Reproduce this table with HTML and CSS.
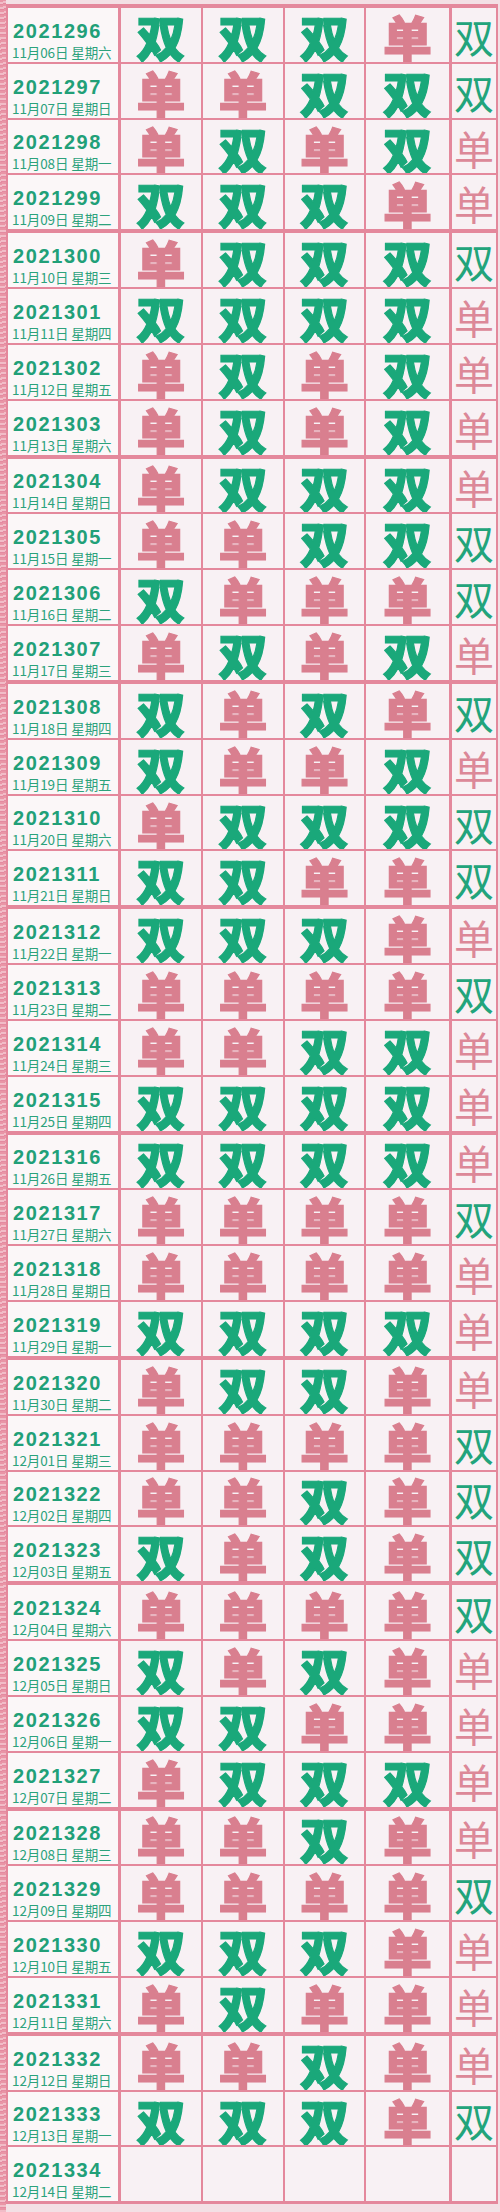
FILE: index.html
```html
<!DOCTYPE html>
<html lang="zh-CN">
<head>
<meta charset="utf-8">
<title>单双</title>
<link rel="stylesheet" href="styles.css">
</head>
<body>
<div class="page">
<div class="sheet">
<div class="row grp"><div class="label"><div class="num">2021296</div><div class="date">11月06日 星期六</div></div><div class="c c1 big s">双</div><div class="c c2 big s">双</div><div class="c c3 big s">双</div><div class="c c4 big d">单</div><div class="c c5 thin s">双</div></div>
<div class="row"><div class="label"><div class="num">2021297</div><div class="date">11月07日 星期日</div></div><div class="c c1 big d">单</div><div class="c c2 big d">单</div><div class="c c3 big s">双</div><div class="c c4 big s">双</div><div class="c c5 thin s">双</div></div>
<div class="row"><div class="label"><div class="num">2021298</div><div class="date">11月08日 星期一</div></div><div class="c c1 big d">单</div><div class="c c2 big s">双</div><div class="c c3 big d">单</div><div class="c c4 big s">双</div><div class="c c5 thin d">单</div></div>
<div class="row"><div class="label"><div class="num">2021299</div><div class="date">11月09日 星期二</div></div><div class="c c1 big s">双</div><div class="c c2 big s">双</div><div class="c c3 big s">双</div><div class="c c4 big d">单</div><div class="c c5 thin d">单</div></div>
<div class="row grp"><div class="label"><div class="num">2021300</div><div class="date">11月10日 星期三</div></div><div class="c c1 big d">单</div><div class="c c2 big s">双</div><div class="c c3 big s">双</div><div class="c c4 big s">双</div><div class="c c5 thin s">双</div></div>
<div class="row"><div class="label"><div class="num">2021301</div><div class="date">11月11日 星期四</div></div><div class="c c1 big s">双</div><div class="c c2 big s">双</div><div class="c c3 big s">双</div><div class="c c4 big s">双</div><div class="c c5 thin d">单</div></div>
<div class="row"><div class="label"><div class="num">2021302</div><div class="date">11月12日 星期五</div></div><div class="c c1 big d">单</div><div class="c c2 big s">双</div><div class="c c3 big d">单</div><div class="c c4 big s">双</div><div class="c c5 thin d">单</div></div>
<div class="row"><div class="label"><div class="num">2021303</div><div class="date">11月13日 星期六</div></div><div class="c c1 big d">单</div><div class="c c2 big s">双</div><div class="c c3 big d">单</div><div class="c c4 big s">双</div><div class="c c5 thin d">单</div></div>
<div class="row grp"><div class="label"><div class="num">2021304</div><div class="date">11月14日 星期日</div></div><div class="c c1 big d">单</div><div class="c c2 big s">双</div><div class="c c3 big s">双</div><div class="c c4 big s">双</div><div class="c c5 thin d">单</div></div>
<div class="row"><div class="label"><div class="num">2021305</div><div class="date">11月15日 星期一</div></div><div class="c c1 big d">单</div><div class="c c2 big d">单</div><div class="c c3 big s">双</div><div class="c c4 big s">双</div><div class="c c5 thin s">双</div></div>
<div class="row"><div class="label"><div class="num">2021306</div><div class="date">11月16日 星期二</div></div><div class="c c1 big s">双</div><div class="c c2 big d">单</div><div class="c c3 big d">单</div><div class="c c4 big d">单</div><div class="c c5 thin s">双</div></div>
<div class="row"><div class="label"><div class="num">2021307</div><div class="date">11月17日 星期三</div></div><div class="c c1 big d">单</div><div class="c c2 big s">双</div><div class="c c3 big d">单</div><div class="c c4 big s">双</div><div class="c c5 thin d">单</div></div>
<div class="row grp"><div class="label"><div class="num">2021308</div><div class="date">11月18日 星期四</div></div><div class="c c1 big s">双</div><div class="c c2 big d">单</div><div class="c c3 big s">双</div><div class="c c4 big d">单</div><div class="c c5 thin s">双</div></div>
<div class="row"><div class="label"><div class="num">2021309</div><div class="date">11月19日 星期五</div></div><div class="c c1 big s">双</div><div class="c c2 big d">单</div><div class="c c3 big d">单</div><div class="c c4 big s">双</div><div class="c c5 thin d">单</div></div>
<div class="row"><div class="label"><div class="num">2021310</div><div class="date">11月20日 星期六</div></div><div class="c c1 big d">单</div><div class="c c2 big s">双</div><div class="c c3 big s">双</div><div class="c c4 big s">双</div><div class="c c5 thin s">双</div></div>
<div class="row"><div class="label"><div class="num">2021311</div><div class="date">11月21日 星期日</div></div><div class="c c1 big s">双</div><div class="c c2 big s">双</div><div class="c c3 big d">单</div><div class="c c4 big d">单</div><div class="c c5 thin s">双</div></div>
<div class="row grp"><div class="label"><div class="num">2021312</div><div class="date">11月22日 星期一</div></div><div class="c c1 big s">双</div><div class="c c2 big s">双</div><div class="c c3 big s">双</div><div class="c c4 big d">单</div><div class="c c5 thin d">单</div></div>
<div class="row"><div class="label"><div class="num">2021313</div><div class="date">11月23日 星期二</div></div><div class="c c1 big d">单</div><div class="c c2 big d">单</div><div class="c c3 big d">单</div><div class="c c4 big d">单</div><div class="c c5 thin s">双</div></div>
<div class="row"><div class="label"><div class="num">2021314</div><div class="date">11月24日 星期三</div></div><div class="c c1 big d">单</div><div class="c c2 big d">单</div><div class="c c3 big s">双</div><div class="c c4 big s">双</div><div class="c c5 thin d">单</div></div>
<div class="row"><div class="label"><div class="num">2021315</div><div class="date">11月25日 星期四</div></div><div class="c c1 big s">双</div><div class="c c2 big s">双</div><div class="c c3 big s">双</div><div class="c c4 big s">双</div><div class="c c5 thin d">单</div></div>
<div class="row grp"><div class="label"><div class="num">2021316</div><div class="date">11月26日 星期五</div></div><div class="c c1 big s">双</div><div class="c c2 big s">双</div><div class="c c3 big s">双</div><div class="c c4 big s">双</div><div class="c c5 thin d">单</div></div>
<div class="row"><div class="label"><div class="num">2021317</div><div class="date">11月27日 星期六</div></div><div class="c c1 big d">单</div><div class="c c2 big d">单</div><div class="c c3 big d">单</div><div class="c c4 big d">单</div><div class="c c5 thin s">双</div></div>
<div class="row"><div class="label"><div class="num">2021318</div><div class="date">11月28日 星期日</div></div><div class="c c1 big d">单</div><div class="c c2 big d">单</div><div class="c c3 big d">单</div><div class="c c4 big d">单</div><div class="c c5 thin d">单</div></div>
<div class="row"><div class="label"><div class="num">2021319</div><div class="date">11月29日 星期一</div></div><div class="c c1 big s">双</div><div class="c c2 big s">双</div><div class="c c3 big s">双</div><div class="c c4 big s">双</div><div class="c c5 thin d">单</div></div>
<div class="row grp"><div class="label"><div class="num">2021320</div><div class="date">11月30日 星期二</div></div><div class="c c1 big d">单</div><div class="c c2 big s">双</div><div class="c c3 big s">双</div><div class="c c4 big d">单</div><div class="c c5 thin d">单</div></div>
<div class="row"><div class="label"><div class="num">2021321</div><div class="date">12月01日 星期三</div></div><div class="c c1 big d">单</div><div class="c c2 big d">单</div><div class="c c3 big d">单</div><div class="c c4 big d">单</div><div class="c c5 thin s">双</div></div>
<div class="row"><div class="label"><div class="num">2021322</div><div class="date">12月02日 星期四</div></div><div class="c c1 big d">单</div><div class="c c2 big d">单</div><div class="c c3 big s">双</div><div class="c c4 big d">单</div><div class="c c5 thin s">双</div></div>
<div class="row"><div class="label"><div class="num">2021323</div><div class="date">12月03日 星期五</div></div><div class="c c1 big s">双</div><div class="c c2 big d">单</div><div class="c c3 big s">双</div><div class="c c4 big d">单</div><div class="c c5 thin s">双</div></div>
<div class="row grp"><div class="label"><div class="num">2021324</div><div class="date">12月04日 星期六</div></div><div class="c c1 big d">单</div><div class="c c2 big d">单</div><div class="c c3 big d">单</div><div class="c c4 big d">单</div><div class="c c5 thin s">双</div></div>
<div class="row"><div class="label"><div class="num">2021325</div><div class="date">12月05日 星期日</div></div><div class="c c1 big s">双</div><div class="c c2 big d">单</div><div class="c c3 big s">双</div><div class="c c4 big d">单</div><div class="c c5 thin d">单</div></div>
<div class="row"><div class="label"><div class="num">2021326</div><div class="date">12月06日 星期一</div></div><div class="c c1 big s">双</div><div class="c c2 big s">双</div><div class="c c3 big d">单</div><div class="c c4 big d">单</div><div class="c c5 thin d">单</div></div>
<div class="row"><div class="label"><div class="num">2021327</div><div class="date">12月07日 星期二</div></div><div class="c c1 big d">单</div><div class="c c2 big s">双</div><div class="c c3 big s">双</div><div class="c c4 big s">双</div><div class="c c5 thin d">单</div></div>
<div class="row grp"><div class="label"><div class="num">2021328</div><div class="date">12月08日 星期三</div></div><div class="c c1 big d">单</div><div class="c c2 big d">单</div><div class="c c3 big s">双</div><div class="c c4 big d">单</div><div class="c c5 thin d">单</div></div>
<div class="row"><div class="label"><div class="num">2021329</div><div class="date">12月09日 星期四</div></div><div class="c c1 big d">单</div><div class="c c2 big d">单</div><div class="c c3 big d">单</div><div class="c c4 big d">单</div><div class="c c5 thin s">双</div></div>
<div class="row"><div class="label"><div class="num">2021330</div><div class="date">12月10日 星期五</div></div><div class="c c1 big s">双</div><div class="c c2 big s">双</div><div class="c c3 big s">双</div><div class="c c4 big d">单</div><div class="c c5 thin d">单</div></div>
<div class="row"><div class="label"><div class="num">2021331</div><div class="date">12月11日 星期六</div></div><div class="c c1 big d">单</div><div class="c c2 big s">双</div><div class="c c3 big d">单</div><div class="c c4 big d">单</div><div class="c c5 thin d">单</div></div>
<div class="row grp"><div class="label"><div class="num">2021332</div><div class="date">12月12日 星期日</div></div><div class="c c1 big d">单</div><div class="c c2 big d">单</div><div class="c c3 big s">双</div><div class="c c4 big d">单</div><div class="c c5 thin d">单</div></div>
<div class="row"><div class="label"><div class="num">2021333</div><div class="date">12月13日 星期一</div></div><div class="c c1 big s">双</div><div class="c c2 big s">双</div><div class="c c3 big s">双</div><div class="c c4 big d">单</div><div class="c c5 thin s">双</div></div>
<div class="row"><div class="label"><div class="num">2021334</div><div class="date">12月14日 星期二</div></div><div class="c c1 big"></div><div class="c c2 big"></div><div class="c c3 big"></div><div class="c c4 big"></div><div class="c c5 thin"></div></div>
</div>
</div>
</body>
</html>
```

FILE: styles.css
```css
* { box-sizing: border-box; }
html, body { margin: 0; padding: 0; }
body {
  width: 500px;
  height: 2212px;
  overflow: hidden;
  background: #f2dde2;
  font-family: "Noto Sans CJK SC", "Noto Sans", sans-serif;
}
.page {
  height: 2212px;
  padding: 4px 2px 0 6px;
  background:
    repeating-linear-gradient(170deg, #e995a6 0 2px, #f1bcc7 2px 4px, #e48aa0 4px 5px) left top / 6px 100% no-repeat,
    #f3e0e5;
}
.sheet {
  display: flex;
  flex-direction: column;
  height: 2200px;
  border-left: 2px solid #e4889c;
  border-right: 2px solid #e4889c;
  border-bottom: 3px solid #e4889c;
  background: #f7eff2;
}
.row {
  flex: 1 1 0;
  min-height: 0;
  display: flex;
  border-top: 2px solid #e4889c;
}
.row.grp { border-top-width: 4px; }
.label {
  width: 110px;
  flex: none;
  display: flex;
  flex-direction: column;
  justify-content: flex-end;
  padding: 0 0 0 4px;
  background: #fbf7f8;
}
.num {
  font: bold 20px/22px "Liberation Sans", Arial, sans-serif;
  letter-spacing: 1.6px;
  color: #21a078;
  padding-left: 1px;
}
.date {
  font: 13.5px/20px "Noto Sans CJK SC", sans-serif;
  letter-spacing: -0.1px;
  color: #2ca27c;
  white-space: nowrap;
}
.c {
  flex: none;
  display: flex;
  align-items: center;
  justify-content: center;
  border-left: 2px solid #e4889c;
  background: #f8f1f4;
}
.c1 { width: 83px; border-left-width: 3px; }
.c2 { width: 82px; }
.c3 { width: 81px; }
.c4 { width: 85px; }
.c5 { width: 47px; border-left-width: 3px; }
.big {
  font-family: "Liberation Sans", "Noto Sans CJK SC", sans-serif;
  font-size: 49px;
  font-weight: 900;
  line-height: 40px;
  padding-top: 10px;
  -webkit-text-stroke: 1.2px currentColor;
}
.thin {
  font-family: "Liberation Sans", "Noto Sans CJK SC", sans-serif;
  font-size: 40px;
  font-weight: 400;
  line-height: 40px;
  padding-top: 8px;
}
.s { color: #1aa87a; }
.d { color: #d97f8f; }
.thin.s { color: #22a47b; }
.thin.d { color: #dc8898; }
```
